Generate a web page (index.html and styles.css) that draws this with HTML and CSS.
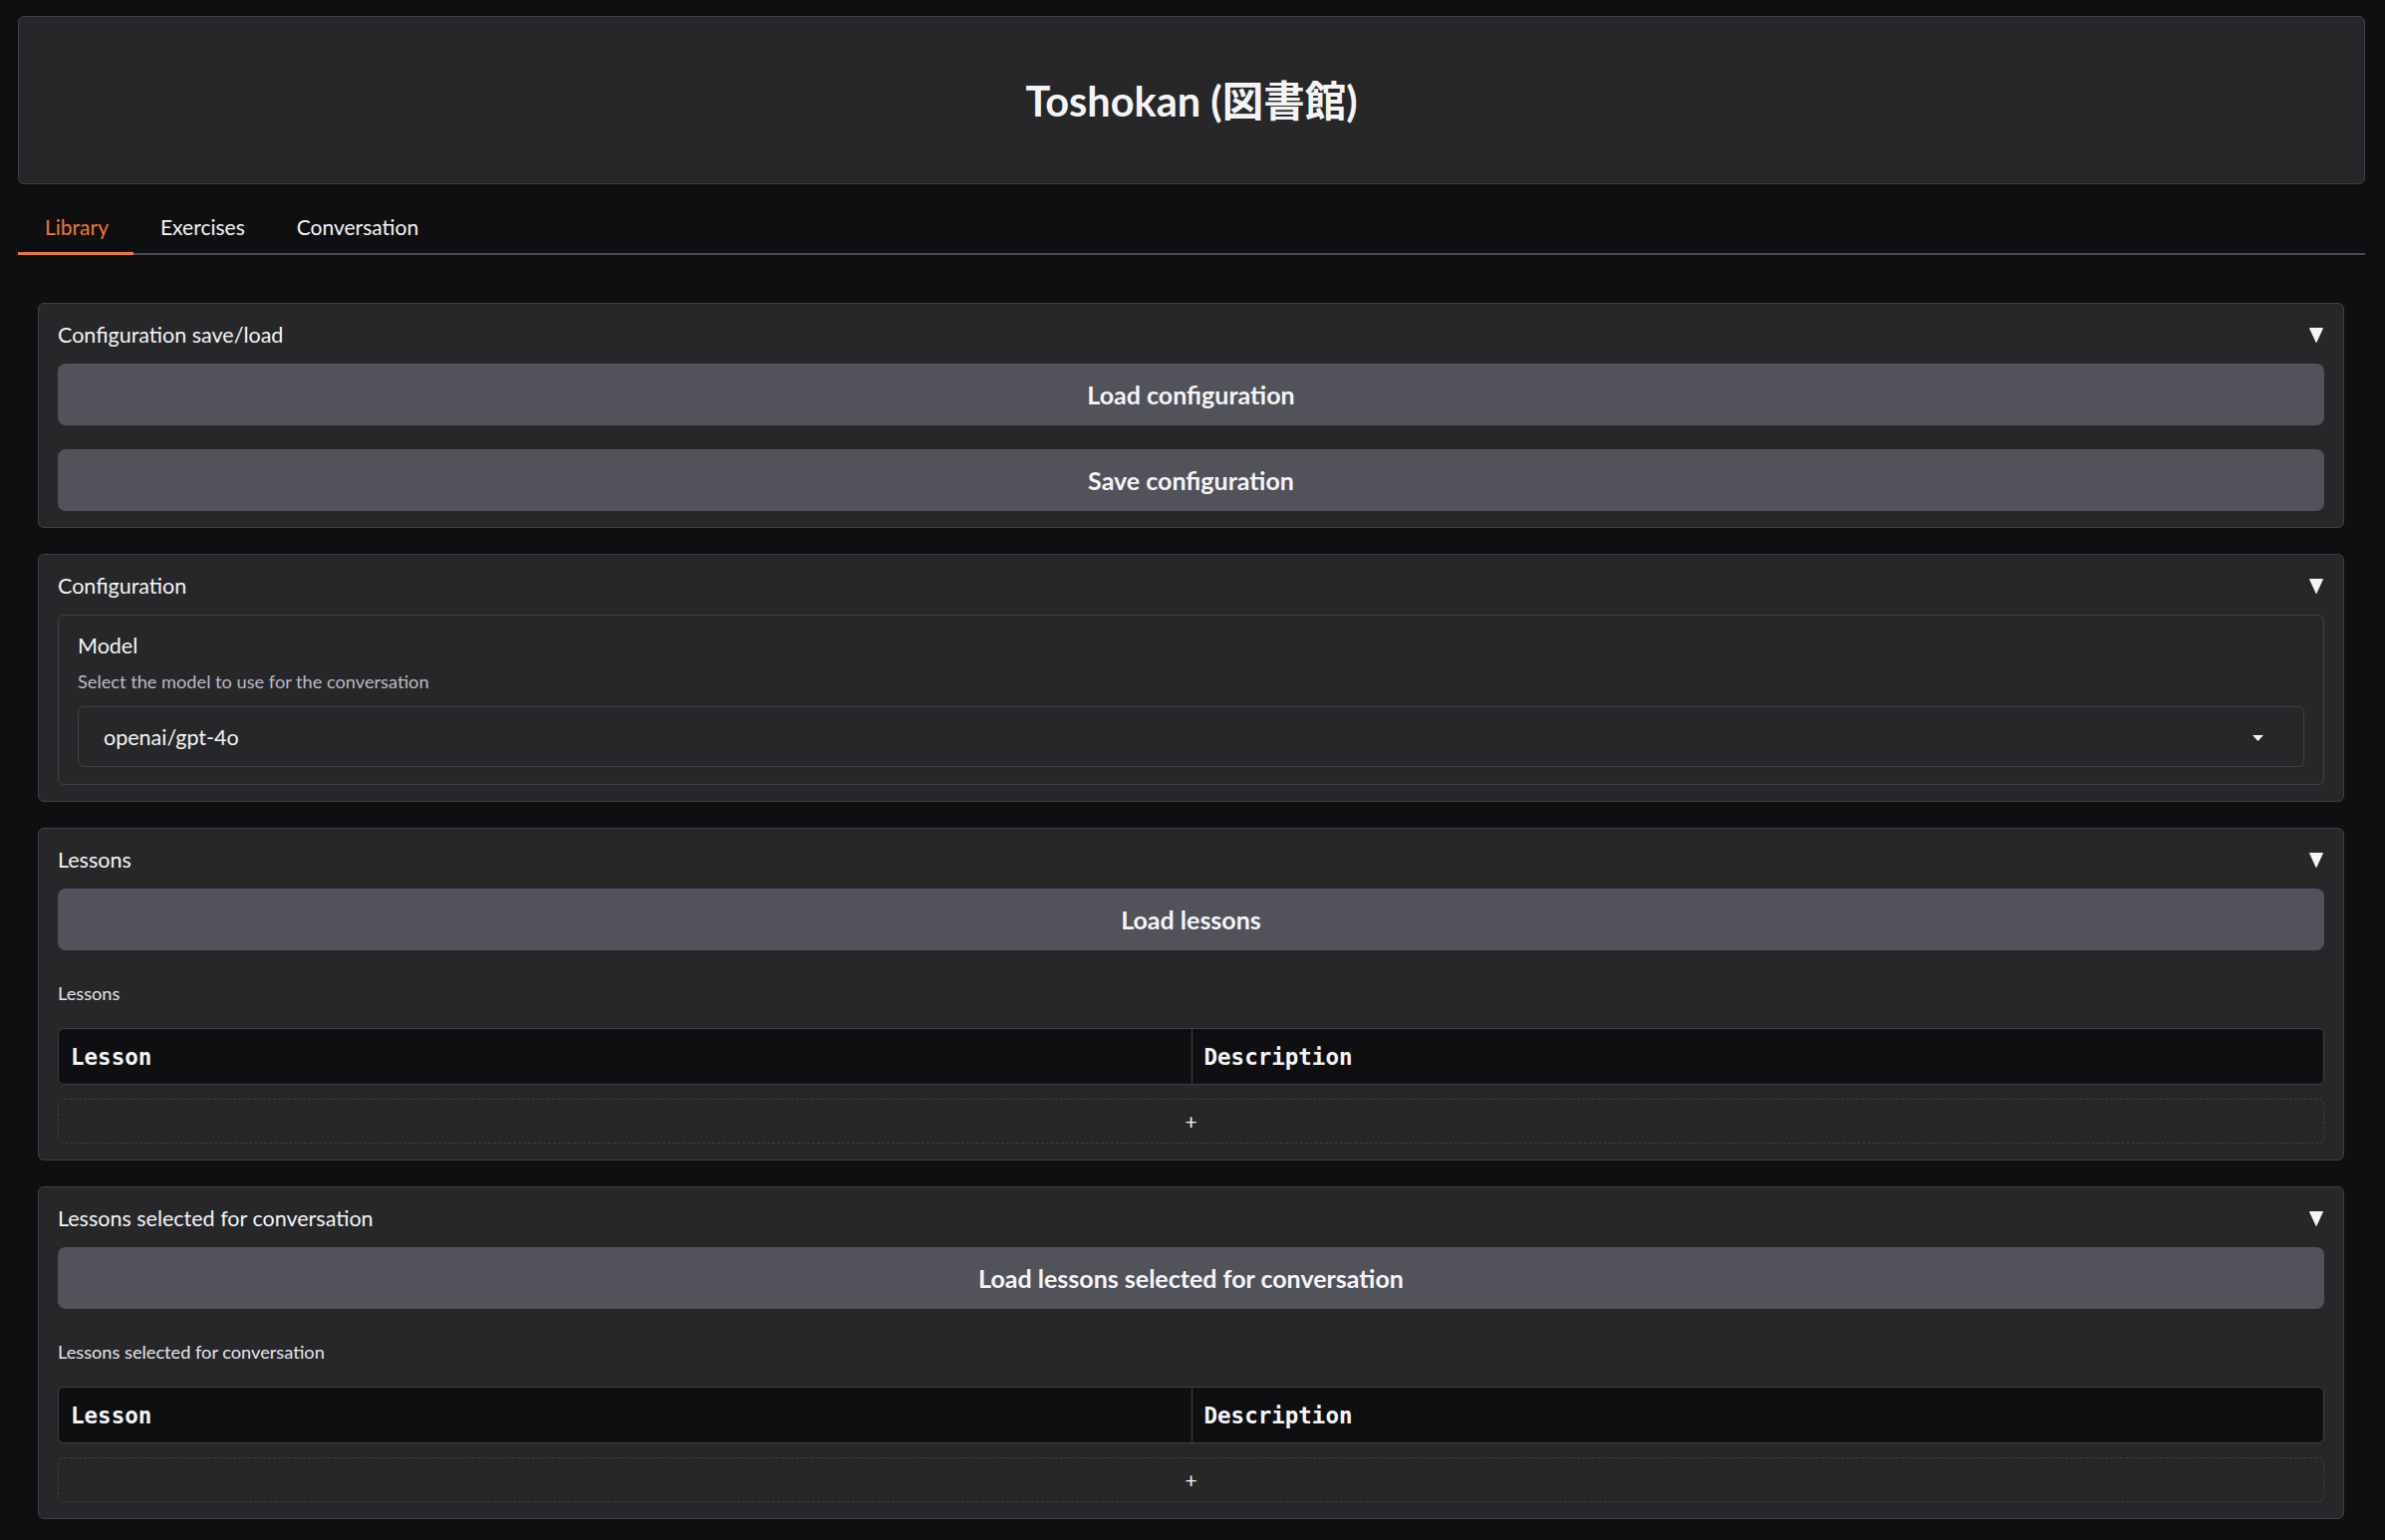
FILE: index.html
```html
<!DOCTYPE html>
<html lang="en">
<head>
<meta charset="utf-8">
<title>Toshokan</title>
<link rel="stylesheet" href="styles.css">
</head>
<body>
<div class="app">
  <header class="hero">
    <h1 class="hero-title">Toshokan (図書館)</h1>
  </header>

  <nav class="tabs">
    <button class="tab tab-active">Library</button>
    <button class="tab">Exercises</button>
    <button class="tab">Conversation</button>
  </nav>

  <main class="tab-panel">
    <section class="acc">
      <div class="acc-head">
        <span class="acc-title">Configuration save/load</span>
        <svg class="acc-caret" width="14" height="15" viewBox="0 0 14 15"><polygon points="0.5,0.5 13.5,0.5 7,14.5" fill="#f4f4f5" stroke="#f4f4f5" stroke-width="1" stroke-linejoin="round"/></svg>
      </div>
      <div class="acc-body acc-body-buttons">
        <button class="btn">Load configuration</button>
        <button class="btn">Save configuration</button>
      </div>
    </section>

    <section class="acc">
      <div class="acc-head">
        <span class="acc-title">Configuration</span>
        <svg class="acc-caret" width="14" height="15" viewBox="0 0 14 15"><polygon points="0.5,0.5 13.5,0.5 7,14.5" fill="#f4f4f5" stroke="#f4f4f5" stroke-width="1" stroke-linejoin="round"/></svg>
      </div>
      <div class="acc-body">
        <div class="field">
          <div class="field-label">Model</div>
          <div class="field-info">Select the model to use for the conversation</div>
          <div class="dropdown">
            <span class="dropdown-value">openai/gpt-4o</span>
            <svg class="dropdown-caret" width="11" height="6" viewBox="0 0 11 6"><polygon points="0,0 11,0 5.5,6" fill="#f4f4f5"/></svg>
          </div>
        </div>
      </div>
    </section>

    <section class="acc">
      <div class="acc-head">
        <span class="acc-title">Lessons</span>
        <svg class="acc-caret" width="14" height="15" viewBox="0 0 14 15"><polygon points="0.5,0.5 13.5,0.5 7,14.5" fill="#f4f4f5" stroke="#f4f4f5" stroke-width="1" stroke-linejoin="round"/></svg>
      </div>
      <div class="acc-body">
        <button class="btn">Load lessons</button>
        <div class="df-label">Lessons</div>
        <div class="df-head">
          <div class="df-cell">Lesson</div>
          <div class="df-cell">Description</div>
        </div>
        <div class="df-add">+</div>
      </div>
    </section>

    <section class="acc">
      <div class="acc-head">
        <span class="acc-title">Lessons selected for conversation</span>
        <svg class="acc-caret" width="14" height="15" viewBox="0 0 14 15"><polygon points="0.5,0.5 13.5,0.5 7,14.5" fill="#f4f4f5" stroke="#f4f4f5" stroke-width="1" stroke-linejoin="round"/></svg>
      </div>
      <div class="acc-body">
        <button class="btn">Load lessons selected for conversation</button>
        <div class="df-label">Lessons selected for conversation</div>
        <div class="df-head">
          <div class="df-cell">Lesson</div>
          <div class="df-cell">Description</div>
        </div>
        <div class="df-add">+</div>
      </div>
    </section>
  </main>
</div>
</body>
</html>
```

FILE: styles.css
```css
* {
  box-sizing: border-box;
}

html, body {
  margin: 0;
  padding: 0;
  background: #0f0f11;
}

body {
  font-family: Lato, "Noto Sans CJK JP", "Noto Sans", sans-serif;
  color: #f4f4f5;
}

.app {
  padding: 16px 20px 22px 18px;
}

.hero {
  height: 169px;
  background: #27272a;
  border: 1px solid #3f3f46;
  border-radius: 6px;
  display: flex;
  align-items: center;
  justify-content: center;
}

.hero-title {
  margin: 0;
  font-size: 41.5px;
  font-weight: 700;
  line-height: 60px;
  color: #f4f4f5;
}

.tabs {
  display: flex;
  margin-top: 19px;
  border-bottom: 2px solid #4a4a52;
}

.tab {
  font-family: inherit;
  font-size: 21px;
  line-height: 36px;
  color: #f4f4f5;
  background: transparent;
  border: 0;
  border-bottom: 3px solid transparent;
  margin-bottom: -2px;
  padding: 6px 25px 7px 27px;
  cursor: pointer;
}

.tab-active {
  color: #ec7a32;
  border-bottom-color: #ec7a32;
}

.tab-panel {
  padding: 48px 21px 0 20px;
  display: flex;
  flex-direction: column;
  gap: 26px;
}

.acc {
  background: #27272a;
  border: 1px solid #3f3f46;
  border-radius: 6px;
  padding: 0 19px 16px 19px;
}

.acc-head {
  height: 60px;
  display: flex;
  align-items: center;
  justify-content: space-between;
  padding-top: 2px;
}

.acc-title {
  font-size: 21.5px;
  line-height: 30px;
}

.acc-caret {
  display: block;
  margin-right: 1px;
}

.acc-body {
  display: flex;
  flex-direction: column;
}

.acc-body-buttons {
  gap: 24px;
}

.btn {
  height: 62px;
  width: 100%;
  border: 0;
  border-radius: 8px;
  background: #52525b;
  color: #f4f4f5;
  font-family: inherit;
  font-size: 25px;
  font-weight: 700;
  cursor: pointer;
}

.field {
  border: 1px solid #3f3f46;
  border-radius: 6px;
  padding: 15px 19px 17px 19px;
}

.field-label {
  font-size: 21.5px;
  line-height: 30px;
}

.field-info {
  margin-top: 8px;
  font-size: 18.2px;
  line-height: 26px;
  color: #babac1;
}

.dropdown {
  margin-top: 12px;
  height: 61px;
  border: 1px solid #3f3f46;
  border-radius: 6px;
  display: flex;
  align-items: center;
  justify-content: space-between;
  padding: 0 40px 0 25px;
}

.dropdown-value {
  font-size: 21.5px;
  line-height: 30px;
}

.dropdown-caret {
  display: block;
  margin-top: 3px;
}

.df-label {
  margin-top: 30px;
  font-size: 18.2px;
  line-height: 26px;
  color: #e4e4e7;
}

.df-head {
  margin-top: 22px;
  height: 57px;
  display: grid;
  grid-template-columns: 1fr 1fr;
  background: #0f0f11;
  border: 1px solid #3f3f46;
  border-radius: 6px;
}

.df-cell {
  display: flex;
  align-items: center;
  padding: 0 12px;
  font-family: "DejaVu Sans Mono", "Liberation Mono", monospace;
  font-size: 22.5px;
  font-weight: 700;
  color: #f4f4f5;
}

.df-cell + .df-cell {
  border-left: 1px solid #3f3f46;
}

.df-add {
  margin-top: 14px;
  height: 45px;
  border: 1px dashed #3f3f46;
  border-radius: 6px;
  display: flex;
  align-items: center;
  justify-content: center;
  font-size: 21px;
  color: #f4f4f5;
}
```
